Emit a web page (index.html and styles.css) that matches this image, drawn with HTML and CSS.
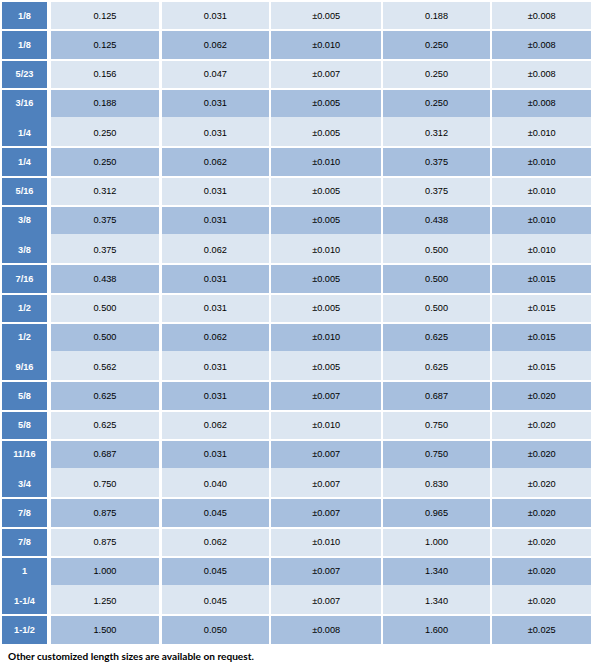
FILE: index.html
```html
<!DOCTYPE html>
<html>
<head>
<meta charset="utf-8">
<link rel="stylesheet" href="styles.css">
</head>
<body>
<div class="page">
  <div class="tbl">
    <div class="row light"><div class="c h">1/8</div><div class="c">0.125</div><div class="c">0.031</div><div class="c">±0.005</div><div class="c">0.188</div><div class="c">±0.008</div></div>
    <div class="row dark"><div class="c h">1/8</div><div class="c">0.125</div><div class="c">0.062</div><div class="c">±0.010</div><div class="c">0.250</div><div class="c">±0.008</div></div>
    <div class="row light"><div class="c h">5/23</div><div class="c">0.156</div><div class="c">0.047</div><div class="c">±0.007</div><div class="c">0.250</div><div class="c">±0.008</div></div>
    <div class="row dark join"><div class="c h">3/16</div><div class="c">0.188</div><div class="c">0.031</div><div class="c">±0.005</div><div class="c">0.250</div><div class="c">±0.008</div></div>
    <div class="row light"><div class="c h">1/4</div><div class="c">0.250</div><div class="c">0.031</div><div class="c">±0.005</div><div class="c">0.312</div><div class="c">±0.010</div></div>
    <div class="row dark"><div class="c h">1/4</div><div class="c">0.250</div><div class="c">0.062</div><div class="c">±0.010</div><div class="c">0.375</div><div class="c">±0.010</div></div>
    <div class="row light"><div class="c h">5/16</div><div class="c">0.312</div><div class="c">0.031</div><div class="c">±0.005</div><div class="c">0.375</div><div class="c">±0.010</div></div>
    <div class="row dark join"><div class="c h">3/8</div><div class="c">0.375</div><div class="c">0.031</div><div class="c">±0.005</div><div class="c">0.438</div><div class="c">±0.010</div></div>
    <div class="row light"><div class="c h">3/8</div><div class="c">0.375</div><div class="c">0.062</div><div class="c">±0.010</div><div class="c">0.500</div><div class="c">±0.010</div></div>
    <div class="row dark"><div class="c h">7/16</div><div class="c">0.438</div><div class="c">0.031</div><div class="c">±0.005</div><div class="c">0.500</div><div class="c">±0.015</div></div>
    <div class="row light"><div class="c h">1/2</div><div class="c">0.500</div><div class="c">0.031</div><div class="c">±0.005</div><div class="c">0.500</div><div class="c">±0.015</div></div>
    <div class="row dark join"><div class="c h">1/2</div><div class="c">0.500</div><div class="c">0.062</div><div class="c">±0.010</div><div class="c">0.625</div><div class="c">±0.015</div></div>
    <div class="row light"><div class="c h">9/16</div><div class="c">0.562</div><div class="c">0.031</div><div class="c">±0.005</div><div class="c">0.625</div><div class="c">±0.015</div></div>
    <div class="row dark"><div class="c h">5/8</div><div class="c">0.625</div><div class="c">0.031</div><div class="c">±0.007</div><div class="c">0.687</div><div class="c">±0.020</div></div>
    <div class="row light"><div class="c h">5/8</div><div class="c">0.625</div><div class="c">0.062</div><div class="c">±0.010</div><div class="c">0.750</div><div class="c">±0.020</div></div>
    <div class="row dark join"><div class="c h">11/16</div><div class="c">0.687</div><div class="c">0.031</div><div class="c">±0.007</div><div class="c">0.750</div><div class="c">±0.020</div></div>
    <div class="row light"><div class="c h">3/4</div><div class="c">0.750</div><div class="c">0.040</div><div class="c">±0.007</div><div class="c">0.830</div><div class="c">±0.020</div></div>
    <div class="row dark"><div class="c h">7/8</div><div class="c">0.875</div><div class="c">0.045</div><div class="c">±0.007</div><div class="c">0.965</div><div class="c">±0.020</div></div>
    <div class="row light"><div class="c h">7/8</div><div class="c">0.875</div><div class="c">0.062</div><div class="c">±0.010</div><div class="c">1.000</div><div class="c">±0.020</div></div>
    <div class="row dark join"><div class="c h">1</div><div class="c">1.000</div><div class="c">0.045</div><div class="c">±0.007</div><div class="c">1.340</div><div class="c">±0.020</div></div>
    <div class="row light"><div class="c h">1-1/4</div><div class="c">1.250</div><div class="c">0.045</div><div class="c">±0.007</div><div class="c">1.340</div><div class="c">±0.020</div></div>
    <div class="row dark"><div class="c h">1-1/2</div><div class="c">1.500</div><div class="c">0.050</div><div class="c">±0.008</div><div class="c">1.600</div><div class="c">±0.025</div></div>
  </div>
  <p class="note">Other customized length sizes are available on request.</p>
</div>
</body>
</html>
```

FILE: styles.css
```css
html, body {
  margin: 0;
  padding: 0;
  background: #ffffff;
}

.page {
  padding: 2px 0 0 2px;
}

.tbl {
  display: grid;
  grid-template-columns: 46.3px 108.6px 107.4px 109.4px 106.6px 99px;
  grid-auto-rows: 29.25px;
  column-gap: 2.4px;
  font-family: "Liberation Sans", Arial, sans-serif;
  font-size: 9.2px;
  color: #000000;
}

.row {
  display: contents;
}

.c {
  box-sizing: border-box;
  display: flex;
  align-items: center;
  justify-content: center;
  padding-top: 1px;
  border-bottom: 2.4px solid #ffffff;
  line-height: 1;
}

.light .c {
  background: #dce6f1;
}

.dark .c {
  background: #a7bfde;
}

.join .c {
  border-bottom-color: #dce6f1;
}

.row .c.h {
  background: #4f81bd;
  color: #ffffff;
  font-weight: bold;
  margin-right: 1.3px;
}

.join .c.h {
  border-bottom-color: #4f81bd;
}

.note {
  margin: 4px 0 0 6px;
  font-family: Lato, "Liberation Sans", sans-serif;
  font-weight: bold;
  font-size: 10.1px;
  line-height: 13px;
  color: #000000;
}
```
